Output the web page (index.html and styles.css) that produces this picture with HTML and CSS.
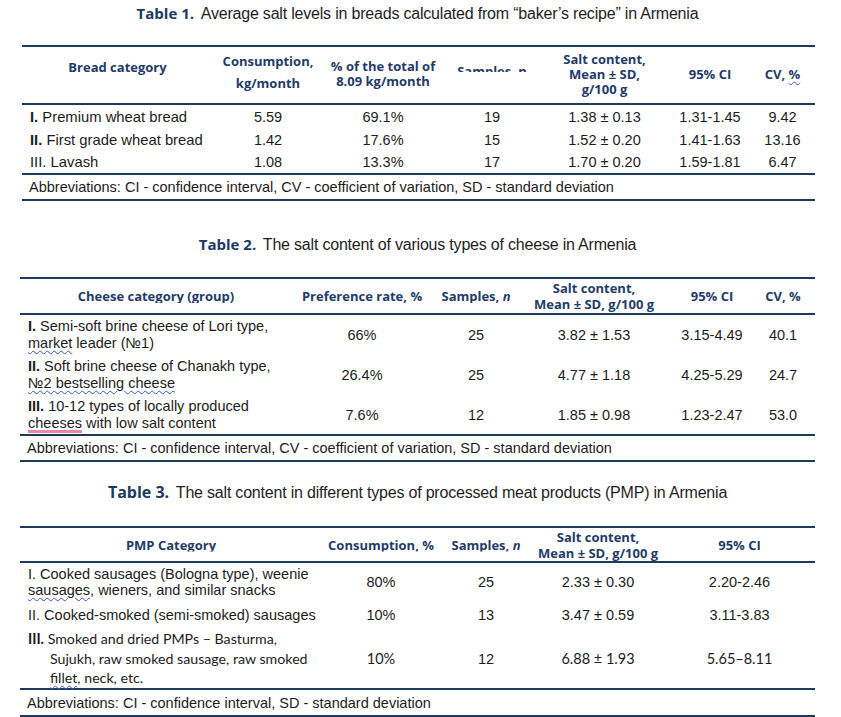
FILE: index.html
```html
<!DOCTYPE html>
<html lang="en">
<head>
<meta charset="utf-8">
<title>Salt tables</title>
<link rel="stylesheet" href="styles.css">
</head>
<body>
<main class="page">

<section class="block">
  <h2 class="title title-1"><b class="tlabel">Table 1.</b> <span class="ttext">Average salt levels in breads calculated from “baker’s recipe” in Armenia</span></h2>
  <table class="tbl t1">
    <colgroup><col class="w1"><col class="w2"><col class="w3"><col class="w4"><col class="w5"><col class="w6"><col class="w7"></colgroup>
    <thead>
      <tr>
        <th class="h-cat">Bread category</th>
        <th class="h-cons">Consumption,<br>kg/month</th>
        <th class="h-pct">% of the total of<br>8.09 kg/month</th>
        <th class="h-samp"><span class="cut">Samples, n</span></th>
        <th class="h-salt">Salt content,<br>Mean ± SD,<br>g/100 g</th>
        <th class="h-ci">95% CI</th>
        <th class="h-ci h-cv">CV, <span class="sq">%</span></th>
      </tr>
    </thead>
    <tbody>
      <tr class="r1"><td class="cat"><b>I.</b> Premium wheat bread</td><td>5.59</td><td>69.1%</td><td>19</td><td>1.38 ± 0.13</td><td>1.31-1.45</td><td class="cv">9.42</td></tr>
      <tr class="r2"><td class="cat"><b>II.</b> First grade wheat bread</td><td>1.42</td><td>17.6%</td><td>15</td><td>1.52 ± 0.20</td><td>1.41-1.63</td><td class="cv">13.16</td></tr>
      <tr class="r3 last"><td class="cat">III. Lavash</td><td>1.08</td><td>13.3%</td><td>17</td><td>1.70 ± 0.20</td><td>1.59-1.81</td><td class="cv">6.47</td></tr>
      <tr class="abbr"><td colspan="7">Abbreviations: CI - confidence interval, CV - coefficient of variation, SD - standard deviation</td></tr>
    </tbody>
  </table>
</section>

<section class="block">
  <h2 class="title title-2"><b class="tlabel">Table 2.</b> <span class="ttext">The salt content of various types of cheese in Armenia</span></h2>
  <table class="tbl t2">
    <colgroup><col class="w1"><col class="w2"><col class="w3"><col class="w4"><col class="w5"><col class="w6"></colgroup>
    <thead>
      <tr>
        <th><span class="clip">Cheese category (group)</span></th>
        <th><span class="clip">Preference rate, %</span></th>
        <th><span class="clip">Samples, <i class="nn">n</i></span></th>
        <th class="h-salt2">Salt content,<br>Mean ± SD, g/100 g</th>
        <th><span class="clip">95% CI</span></th>
        <th class="h-cv2"><span class="clip">CV, %</span></th>
      </tr>
    </thead>
    <tbody>
      <tr class="r1"><td class="cat"><b>I.</b> Semi-soft brine cheese of Lori type,<br><span class="sq">market</span> leader (№1)</td><td>66%</td><td>25</td><td>3.82 ± 1.53</td><td>3.15-4.49</td><td class="cv2">40.1</td></tr>
      <tr class="r2"><td class="cat"><b>II.</b> Soft brine cheese of Chanakh type,<br><span class="sq">№2 bestselling cheese</span></td><td>26.4%</td><td>25</td><td>4.77 ± 1.18</td><td>4.25-5.29</td><td class="cv2">24.7</td></tr>
      <tr class="r3 last"><td class="cat"><b>III.</b> 10-12 types of locally produced<br><span class="pink">cheeses</span> with low salt content</td><td>7.6%</td><td>12</td><td>1.85 ± 0.98</td><td>1.23-2.47</td><td class="cv2">53.0</td></tr>
      <tr class="abbr"><td colspan="6">Abbreviations: CI - confidence interval, CV - coefficient of variation, SD - standard deviation</td></tr>
    </tbody>
  </table>
</section>

<section class="block">
  <h2 class="title title-3"><b class="tlabel">Table 3.</b> <span class="ttext">The salt content in different types of processed meat products (PMP) in Armenia</span></h2>
  <table class="tbl t3">
    <colgroup><col class="w1"><col class="w2"><col class="w3"><col class="w4"><col class="w5"></colgroup>
    <thead>
      <tr>
        <th><span class="clip">PMP Category</span></th>
        <th><span class="clip">Consumption, %</span></th>
        <th><span class="clip">Samples, <i class="nn">n</i></span></th>
        <th class="h-salt2">Salt content,<br>Mean ± SD, g/100 g</th>
        <th><span class="clip">95% CI</span></th>
      </tr>
    </thead>
    <tbody>
      <tr class="r1"><td class="cat">I. Cooked sausages (Bologna type), weenie<br><span class="sq">sausages</span>, wieners, and similar snacks</td><td>80%</td><td>25</td><td>2.33 ± 0.30</td><td>2.20-2.46</td></tr>
      <tr class="r2"><td class="cat">II. Cooked-smoked (semi-smoked) sausages</td><td>10%</td><td>13</td><td>3.47 ± 0.59</td><td>3.11-3.83</td></tr>
      <tr class="r3 last"><td class="cat hang"><b>III.</b> Smoked and dried PMPs – Basturma,<br>Sujukh, raw smoked sausage, raw smoked<br><span class="sq">fillet</span>, neck, etc.</td><td class="alt">10%</td><td>12</td><td class="alt">6.88 ± 1.93</td><td class="alt">5.65–8.11</td></tr>
      <tr class="abbr"><td colspan="5">Abbreviations: CI - confidence interval, SD - standard deviation</td></tr>
    </tbody>
  </table>
</section>

</main>
</body>
</html>
```

FILE: styles.css
```css
* { box-sizing: border-box; }
html, body { margin: 0; padding: 0; background: #ffffff; }
body {
  font-family: "Liberation Sans", Arial, sans-serif;
  color: #1c1c1c;
}
.page { width: 841px; padding-left: 20px; }

/* titles */
.title {
  margin: 0;
  width: 795px;
  height: 18px;
  line-height: 18px;
  text-align: center;
  white-space: nowrap;
  font-weight: normal;
  color: #1e1e1e;
}
.tlabel {
  font-family: "Open Sans", sans-serif;
  font-weight: 700;
  font-size: 15px;
  color: #1b3a62;
}
.ttext {
  font-family: "Liberation Sans", Arial, sans-serif;
  font-size: 16px;
  letter-spacing: -0.2px;
}
.title-1 { margin-top: 2px; margin-bottom: 25px; }
.title-2 { margin-top: 32px; margin-bottom: 26px; }
.title-3 { margin-top: 19px; margin-bottom: 27px; }
.title-3 .tlabel { font-size: 16px; }

/* tables */
.tbl {
  border-collapse: separate;
  border-spacing: 0;
  table-layout: fixed;
}
.t1 { width: 793px; margin-left: 2px; }
.t2, .t3 { width: 795px; }

.tbl th {
  padding: 0;
  font-family: "Open Sans", sans-serif;
  font-weight: 700;
  font-size: 13px;
  color: #1f3c68;
  text-align: center;
  border-top: 2px solid #1f3a5a;
  border-bottom: 2px solid #1f3a5a;
  white-space: nowrap;
}
.tbl td {
  padding: 0;
  font-family: "Liberation Sans", Arial, sans-serif;
  font-size: 14.5px;
  text-align: center;
  vertical-align: middle;
  white-space: nowrap;
}
.tbl td.cat { text-align: left; padding-left: 8px; }
.tbl tr.last td { border-bottom: 2px solid #1f3a5a; }
.tbl tr.abbr td {
  font-family: "Liberation Sans", Arial, sans-serif;
  text-align: left;
  padding-left: 7px;
  border-bottom: 2px solid #1f3a5a;
}

/* table 1 */
.t1 .w1 { width: 191px; }
.t1 .w2 { width: 110px; }
.t1 .w3 { width: 120px; }
.t1 .w4 { width: 98px; }
.t1 .w5 { width: 127px; }
.t1 .w6 { width: 84px; }
.t1 .w7 { width: 63px; }
.t1 thead tr { height: 60px; }
.t1 th { vertical-align: top; }
.t1 .h-cat { padding-top: 11px; line-height: 18px; }
.t1 .h-cons { padding-top: 3px; line-height: 22px; }
.t1 .h-pct { padding-top: 12px; line-height: 15px; }
.t1 .h-samp { padding-top: 18px; line-height: 13px; }
.t1 .h-salt { padding-top: 5px; line-height: 15px; }
.t1 .h-ci { padding-top: 18px; line-height: 18px; }
.t1 .h-cv { padding-right: 2px; }
.t1 td.cv { padding-right: 2px; }
.t1 td.cat { font-size: 14.8px; }
.t1 tr.r1, .t1 tr.r2 { height: 23px; }
.t1 tr.r3 { height: 24px; }
.t1 tr.abbr { height: 26px; }
.cut {
  display: inline-block;
  height: 7px;
  overflow: hidden;
  vertical-align: top;
}

/* table 2 */
.t2 .w1 { width: 272px; }
.t2 .w2 { width: 140px; }
.t2 .w3 { width: 88px; }
.t2 .w4 { width: 148px; }
.t2 .w5 { width: 88px; }
.t2 .w6 { width: 59px; }
.t2 th, .t3 th { vertical-align: middle; line-height: 16px; }
.t2 thead tr { height: 38px; }
.t2 td.cat { line-height: 17px; }
.t2 td.cv2, .t2 .h-cv2 { padding-right: 5px; }
.t2 tr.r1, .t2 tr.r2 { height: 40px; }
.t2 tr.r3 { height: 41px; }
.t2 tr.abbr { height: 26px; }

/* table 3 */
.t3 .w1 { width: 302px; }
.t3 .w2 { width: 118px; }
.t3 .w3 { width: 92px; }
.t3 .w4 { width: 132px; }
.t3 .w5 { width: 151px; }
.t3 thead tr { height: 37px; }
.t3 tr.r1 { height: 38px; }
.t3 tr.r2 { height: 28px; }
.t3 tr.r3 { height: 61px; }
.t3 tr.abbr { height: 27px; }
.t3 td.cat { line-height: 16px; }
.t3 td.hang {
  font-family: Lato, "Open Sans", sans-serif;
  font-size: 14.2px;
  line-height: 19.5px;
  padding-left: 30px;
  text-indent: -22px;
}
.t3 td.alt { font-family: Lato, "Open Sans", sans-serif; font-size: 14.5px; }

.clip {
  display: inline-block;
  clip-path: inset(3px 0 1px 0);
}
.nn { font-style: italic; }

.sq {
  text-decoration: underline wavy #3c55c8;
  text-decoration-thickness: 1px;
  text-underline-offset: 2px;
}
.pink {
  text-decoration: underline solid #e48aa4;
  text-decoration-thickness: 3px;
  text-underline-offset: 2px;
}
```
